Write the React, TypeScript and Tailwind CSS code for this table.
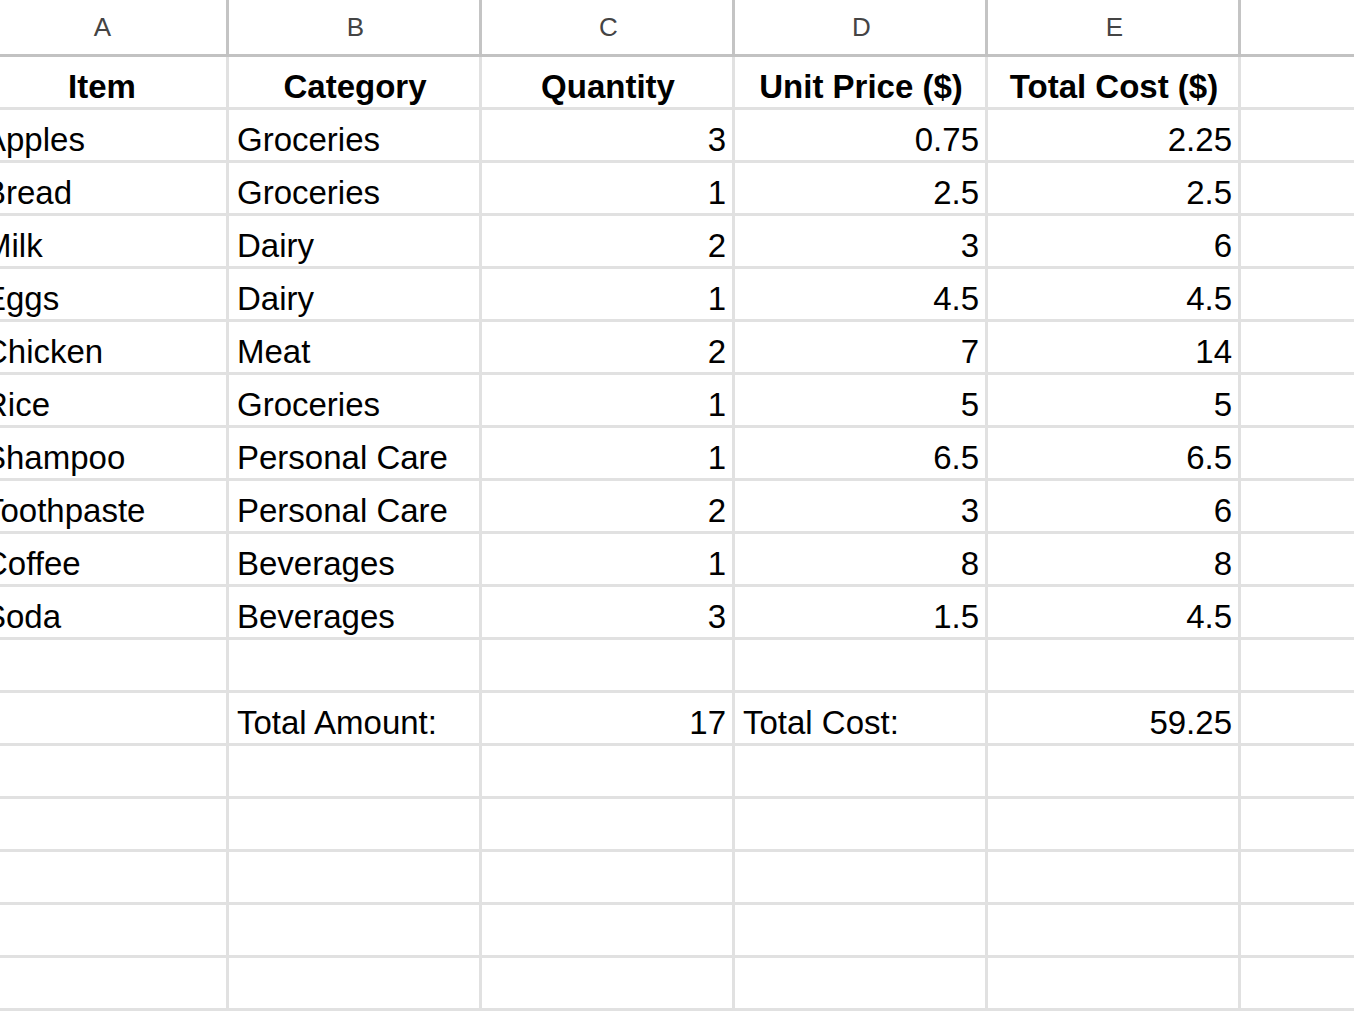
import React from "react";

type Row = [string, string, string, string, string];

const data: Row[] = [
  ["Apples", "Groceries", "3", "0.75", "2.25"],
  ["Bread", "Groceries", "1", "2.5", "2.5"],
  ["Milk", "Dairy", "2", "3", "6"],
  ["Eggs", "Dairy", "1", "4.5", "4.5"],
  ["Chicken", "Meat", "2", "7", "14"],
  ["Rice", "Groceries", "1", "5", "5"],
  ["Shampoo", "Personal Care", "1", "6.5", "6.5"],
  ["Toothpaste", "Personal Care", "2", "3", "6"],
  ["Coffee", "Beverages", "1", "8", "8"],
  ["Soda", "Beverages", "3", "1.5", "4.5"],
];

const cols = "grid grid-cols-[253px_253px_253px_253px_253px_1fr]";

type CellProps = { text?: string; align?: "left" | "right" | "center"; bold?: boolean };

const Cell: React.FC<CellProps> = ({ text = "", align = "left", bold = false }) => {
  const justify =
    align === "right"
      ? "justify-end pr-[6px]"
      : align === "center"
        ? "justify-center pl-[2px]"
        : "justify-start pl-[8px]";
  return (
    <div
      className={`flex items-end pb-[1px] overflow-hidden whitespace-nowrap border-r-[3px] border-[#e1e1e1] ${justify} ${
        bold ? "font-bold" : ""
      }`}
    >
      <span className="leading-[38px]">{text}</span>
    </div>
  );
};

const GridRow: React.FC<{ cells?: CellProps[] }> = ({ cells = [] }) => (
  <div className={`${cols} h-[53px] border-b-[3px] border-[#e1e1e1]`}>
    {[0, 1, 2, 3, 4].map((i) => (
      <Cell key={i} {...(cells[i] || {})} />
    ))}
    <div />
  </div>
);

export default function App() {
  const letters = ["A", "B", "C", "D", "E"];
  return (
    <div className="w-[1354px] h-[1012px] overflow-hidden bg-white text-black font-['Liberation_Sans',Arial,sans-serif] text-[33px]">
      <div className="ml-[-24px] w-[1378px]">
        {/* column letters */}
        <div className={`${cols} h-[57px] border-b-[3px] border-[#c2c2c2]`}>
          {letters.map((l) => (
            <div
              key={l}
              className="flex items-center justify-center pt-[1px] pl-[3px] border-r-[3px] border-[#c4c4c4] text-[26px] text-[#444444]"
            >
              {l}
            </div>
          ))}
          <div />
        </div>

        <GridRow
          cells={[
            { text: "Item", align: "center", bold: true },
            { text: "Category", align: "center", bold: true },
            { text: "Quantity", align: "center", bold: true },
            { text: "Unit Price ($)", align: "center", bold: true },
            { text: "Total Cost ($)", align: "center", bold: true },
          ]}
        />

        {data.map((r) => (
          <GridRow
            key={r[0]}
            cells={[
              { text: r[0] },
              { text: r[1] },
              { text: r[2], align: "right" },
              { text: r[3], align: "right" },
              { text: r[4], align: "right" },
            ]}
          />
        ))}

        <GridRow />
        <GridRow
          cells={[
            {},
            { text: "Total Amount:" },
            { text: "17", align: "right" },
            { text: "Total Cost:" },
            { text: "59.25", align: "right" },
          ]}
        />
        {[0, 1, 2, 3, 4].map((i) => (
          <GridRow key={i} />
        ))}
      </div>
    </div>
  );
}
